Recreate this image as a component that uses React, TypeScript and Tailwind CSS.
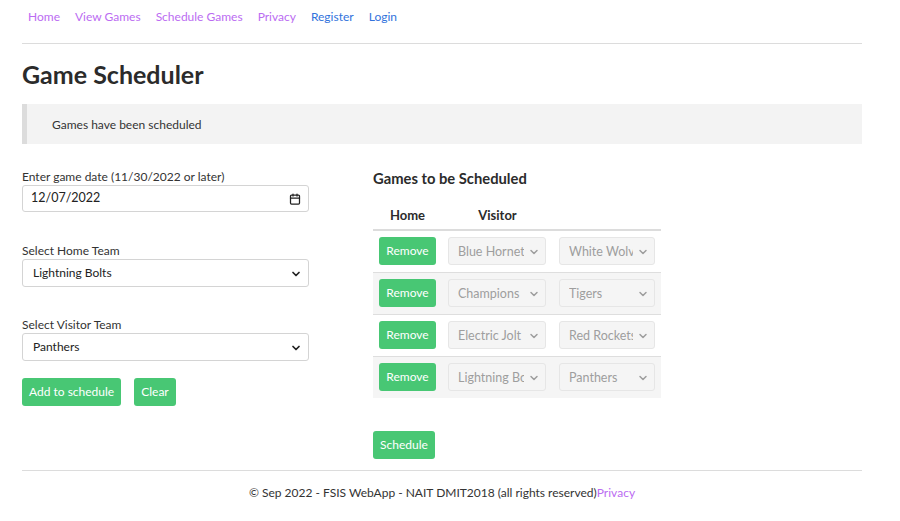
import { ChevronDown, Calendar } from 'lucide-react'

const font = { fontFamily: 'Lato, "Noto Sans", sans-serif' }

const navLinks = [
  { label: 'Home', visited: true },
  { label: 'View Games', visited: true },
  { label: 'Schedule Games', visited: true },
  { label: 'Privacy', visited: true },
  { label: 'Register', visited: false },
  { label: 'Login', visited: false },
]

const games = [
  { home: 'Blue Hornets', visitor: 'White Wolves' },
  { home: 'Champions', visitor: 'Tigers' },
  { home: 'Electric Jolt', visitor: 'Red Rockets' },
  { home: 'Lightning Bolts', visitor: 'Panthers' },
]

const FormSelect = ({ value }: { value: string }) => (
  <div className="relative flex items-center h-[28px] w-[287px] border border-[#d4d4d4] rounded-[3px] bg-white pl-[10px] text-[12px] text-[#222]">
    {value}
    <ChevronDown className="absolute right-[6px] top-[8px] w-[12px] h-[12px] text-[#222]" strokeWidth={3.5} />
  </div>
)

const DisabledSelect = ({ value, width }: { value: string; width: string }) => (
  <div className={`relative h-[28px] ${width} border border-[#e6e6e6] rounded-[3px] bg-[#f5f5f5] pl-[9px] pr-[21px] text-[12.5px] text-[#9e9e9e]`}>
    <div className="overflow-hidden whitespace-nowrap leading-[28px] h-[26px]">{value}</div>
    <ChevronDown className="absolute right-[5px] top-[8px] w-[12px] h-[12px] text-[#9e9e9e]" strokeWidth={3} />
  </div>
)

export default function App() {
  return (
    <div className="w-[900px] min-h-[521px] bg-white text-[#333]" style={font}>
      <div className="ml-[22px] w-[840px]">
        {/* nav */}
        <nav className="h-[34px] flex items-center gap-[15px] pl-[6px] text-[12px]">
          {navLinks.map((l) => (
            <a key={l.label} className={l.visited ? 'text-[#bb6cf2]' : 'text-[#3273dc]'}>
              {l.label}
            </a>
          ))}
        </nav>
        <div className="mt-[9px] border-t border-[#dcdcdc]" />

        <h1 className="mt-[14px] text-[25px] leading-[32px] font-bold text-[#2b2b2b]">Game Scheduler</h1>

        <div className="mt-[14px] h-[40px] flex items-center bg-[#f3f3f3] border-l-[5px] border-[#dcdcdc] pl-[25px] pt-[2px] text-[12px] text-[#333]">
          Games have been scheduled
        </div>

        <div className="flex mt-[25px]">
          {/* left form */}
          <div className="w-[351px] text-[12px]">
            <div className="leading-[16px]">Enter game date (11/30/2022 or later)</div>
            <div className="relative flex items-center h-[27px] w-[287px] border border-[#d4d4d4] rounded-[3px] pl-[8px] text-[12.5px] text-[#222]">
              12/07/2022
              <Calendar className="absolute right-[7px] top-[7px] w-[12px] h-[12px] text-[#222]" strokeWidth={2.5} />
            </div>

            <div className="mt-[31px] leading-[16px]">Select Home Team</div>
            <FormSelect value="Lightning Bolts" />

            <div className="mt-[30px] leading-[16px]">Select Visitor Team</div>
            <FormSelect value="Panthers" />

            <div className="mt-[17px] flex gap-[13px]">
              <button className="h-[28px] px-[7px] rounded-[3px] bg-[#48c774] text-white text-[12px]">Add to schedule</button>
              <button className="h-[28px] px-[7px] rounded-[3px] bg-[#48c774] text-white text-[12px]">Clear</button>
            </div>
          </div>

          {/* right table */}
          <div className="w-[288px]">
            <h2 className="text-[14.75px] leading-[18px] font-bold text-[#2b2b2b]">Games to be Scheduled</h2>
            <table className="mt-[15px] w-[288px] border-collapse text-[12px]">
              <thead>
                <tr className="border-b-2 border-[#dcdcdc]">
                  <th className="w-[69px] h-[28px] font-bold text-center text-[13px] text-[#2b2b2b]">Home</th>
                  <th className="w-[111px] font-bold text-center text-[13px] text-[#2b2b2b]">Visitor</th>
                  <th />
                </tr>
              </thead>
              <tbody>
                {games.map((g, i) => (
                  <tr key={g.home} className={`border-b border-[#dedede] last:border-b-0 ${i % 2 === 1 ? 'bg-[#f5f5f5]' : 'bg-white'}`}>
                    <td className="pt-[6px] pb-[7px] pl-[6px]">
                      <button className="h-[28px] w-[57px] rounded-[3px] bg-[#48c774] text-white text-[12px]">Remove</button>
                    </td>
                    <td className="pt-[6px] pb-[7px] pl-[6px]">
                      <DisabledSelect value={g.home} width="w-[98px]" />
                    </td>
                    <td className="pt-[6px] pb-[7px] pl-[6px]">
                      <DisabledSelect value={g.visitor} width="w-[96px]" />
                    </td>
                  </tr>
                ))}
              </tbody>
            </table>
            <button className="mt-[33px] h-[28px] px-[7px] rounded-[3px] bg-[#48c774] text-white text-[12px]">Schedule</button>
          </div>
        </div>

        <div className="mt-[11px] border-t border-[#dcdcdc]" />
        <footer className="mt-[13px] text-center text-[12px] leading-[18px] text-[#333]">
          © Sep 2022 - FSIS WebApp - NAIT DMIT2018 (all rights reserved)<a className="text-[#bb6cf2]">Privacy</a>
        </footer>
      </div>
    </div>
  )
}
